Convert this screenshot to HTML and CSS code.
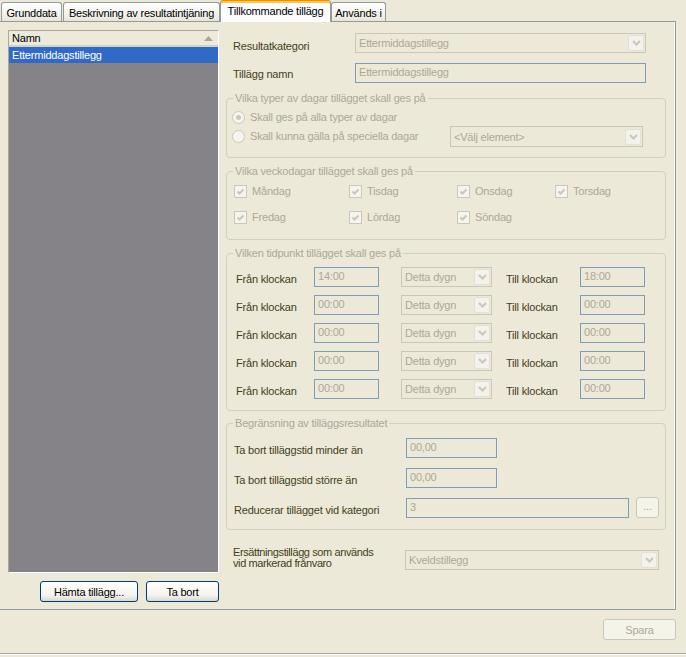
FILE: index.html
```html
<!DOCTYPE html>
<html lang="sv">
<head>
<meta charset="utf-8">
<title>Tillkommande tillägg</title>
<link rel="stylesheet" href="styles.css">
</head>
<body>
<div class="window">
  <div class="tabs">
    <div class="tab tab-grund">Grunddata</div>
    <div class="tab tab-besk">Beskrivning av resultatintjäning</div>
    <div class="tab tab-active">Tillkommande tillägg</div>
    <div class="tab tab-anv">Används i</div>
  </div>

  <div class="panel">
    <div class="left">
      <div class="list">
        <div class="list-head">
          <span>Namn</span>
          <svg class="sort" width="9" height="5" viewBox="0 0 9 5"><path d="M0 5 L4.5 0 L9 5 Z" fill="#ACA899"/></svg>
        </div>
        <div class="list-row selected">Ettermiddagstillegg</div>
        <div class="list-empty"></div>
      </div>
      <div class="left-buttons">
        <button class="btn btn-hamta">Hämta tillägg...</button>
        <button class="btn btn-tabort">Ta bort</button>
      </div>
    </div>

    <div class="form">
      <div class="row row-top">
        <span class="label lbl-top lbl-kat">Resultatkategori</span>
        <div class="combo combo-kat"><span class="val">Ettermiddagstillegg</span><span class="drop"><svg width="9" height="6" viewBox="0 0 9 6"><path d="M1 1 L4.5 4.5 L8 1" fill="none" stroke="#C9C7BA" stroke-width="2"/></svg></span></div>
      </div>
      <div class="row row-top row-namn">
        <span class="label lbl-top lbl-namn">Tillägg namn</span>
        <div class="textbox tb-namn">Ettermiddagstillegg</div>
      </div>

      <fieldset class="group group-typer">
        <legend>Vilka typer av dagar tillägget skall ges på</legend>
        <div class="radio-row radio-row-1">
          <span class="radio"><span class="dot"></span></span>
          <span class="opt-text">Skall ges på alla typer av dagar</span>
        </div>
        <div class="radio-row radio-row-2">
          <span class="radio"></span>
          <span class="opt-text opt-special">Skall kunna gälla på speciella dagar</span>
          <div class="combo combo-element"><span class="val">&lt;Välj element&gt;</span><span class="drop"><svg width="9" height="6" viewBox="0 0 9 6"><path d="M1 1 L4.5 4.5 L8 1" fill="none" stroke="#C9C7BA" stroke-width="2"/></svg></span></div>
        </div>
      </fieldset>

      <fieldset class="group group-vecka">
        <legend>Vilka veckodagar tillägget skall ges på</legend>
        <div class="days">
          <div class="day"><span class="check"><svg width="11" height="11" viewBox="0 0 11 11"><path d="M2.5 5.5 L4.5 7.5 L8.5 3.5" fill="none" stroke="#C9C7BA" stroke-width="2"/></svg></span><span class="opt-text">Måndag</span></div>
          <div class="day"><span class="check"><svg width="11" height="11" viewBox="0 0 11 11"><path d="M2.5 5.5 L4.5 7.5 L8.5 3.5" fill="none" stroke="#C9C7BA" stroke-width="2"/></svg></span><span class="opt-text">Tisdag</span></div>
          <div class="day"><span class="check"><svg width="11" height="11" viewBox="0 0 11 11"><path d="M2.5 5.5 L4.5 7.5 L8.5 3.5" fill="none" stroke="#C9C7BA" stroke-width="2"/></svg></span><span class="opt-text">Onsdag</span></div>
          <div class="day"><span class="check"><svg width="11" height="11" viewBox="0 0 11 11"><path d="M2.5 5.5 L4.5 7.5 L8.5 3.5" fill="none" stroke="#C9C7BA" stroke-width="2"/></svg></span><span class="opt-text">Torsdag</span></div>
          <div class="day"><span class="check"><svg width="11" height="11" viewBox="0 0 11 11"><path d="M2.5 5.5 L4.5 7.5 L8.5 3.5" fill="none" stroke="#C9C7BA" stroke-width="2"/></svg></span><span class="opt-text">Fredag</span></div>
          <div class="day"><span class="check"><svg width="11" height="11" viewBox="0 0 11 11"><path d="M2.5 5.5 L4.5 7.5 L8.5 3.5" fill="none" stroke="#C9C7BA" stroke-width="2"/></svg></span><span class="opt-text">Lördag</span></div>
          <div class="day"><span class="check"><svg width="11" height="11" viewBox="0 0 11 11"><path d="M2.5 5.5 L4.5 7.5 L8.5 3.5" fill="none" stroke="#C9C7BA" stroke-width="2"/></svg></span><span class="opt-text">Söndag</span></div>
        </div>
      </fieldset>

      <fieldset class="group group-tid">
        <legend>Vilken tidpunkt tillägget skall ges på</legend>
        <div class="time-rows">
          <div class="time-row">
            <span class="label lbl-fran">Från klockan</span>
            <div class="textbox tb-time">14:00</div>
            <div class="combo combo-dygn"><span class="val">Detta dygn</span><span class="drop"><svg width="9" height="6" viewBox="0 0 9 6"><path d="M1 1 L4.5 4.5 L8 1" fill="none" stroke="#C9C7BA" stroke-width="2"/></svg></span></div>
            <span class="label lbl-till">Till klockan</span>
            <div class="textbox tb-time">18:00</div>
          </div>
          <div class="time-row">
            <span class="label lbl-fran">Från klockan</span>
            <div class="textbox tb-time">00:00</div>
            <div class="combo combo-dygn"><span class="val">Detta dygn</span><span class="drop"><svg width="9" height="6" viewBox="0 0 9 6"><path d="M1 1 L4.5 4.5 L8 1" fill="none" stroke="#C9C7BA" stroke-width="2"/></svg></span></div>
            <span class="label lbl-till">Till klockan</span>
            <div class="textbox tb-time">00:00</div>
          </div>
          <div class="time-row">
            <span class="label lbl-fran">Från klockan</span>
            <div class="textbox tb-time">00:00</div>
            <div class="combo combo-dygn"><span class="val">Detta dygn</span><span class="drop"><svg width="9" height="6" viewBox="0 0 9 6"><path d="M1 1 L4.5 4.5 L8 1" fill="none" stroke="#C9C7BA" stroke-width="2"/></svg></span></div>
            <span class="label lbl-till">Till klockan</span>
            <div class="textbox tb-time">00:00</div>
          </div>
          <div class="time-row">
            <span class="label lbl-fran">Från klockan</span>
            <div class="textbox tb-time">00:00</div>
            <div class="combo combo-dygn"><span class="val">Detta dygn</span><span class="drop"><svg width="9" height="6" viewBox="0 0 9 6"><path d="M1 1 L4.5 4.5 L8 1" fill="none" stroke="#C9C7BA" stroke-width="2"/></svg></span></div>
            <span class="label lbl-till">Till klockan</span>
            <div class="textbox tb-time">00:00</div>
          </div>
          <div class="time-row">
            <span class="label lbl-fran">Från klockan</span>
            <div class="textbox tb-time">00:00</div>
            <div class="combo combo-dygn"><span class="val">Detta dygn</span><span class="drop"><svg width="9" height="6" viewBox="0 0 9 6"><path d="M1 1 L4.5 4.5 L8 1" fill="none" stroke="#C9C7BA" stroke-width="2"/></svg></span></div>
            <span class="label lbl-till">Till klockan</span>
            <div class="textbox tb-time">00:00</div>
          </div>
        </div>
      </fieldset>

      <fieldset class="group group-begr">
        <legend>Begränsning av tilläggsresultatet</legend>
        <div class="begr-rows">
          <div class="begr-row">
            <span class="label lbl-begr">Ta bort tilläggstid minder än</span>
            <div class="textbox tb-num">00,00</div>
          </div>
          <div class="begr-row">
            <span class="label lbl-begr">Ta bort tilläggstid större än</span>
            <div class="textbox tb-num">00,00</div>
          </div>
          <div class="begr-row">
            <span class="label lbl-begr">Reducerar tillägget vid kategori</span>
            <div class="textbox tb-kat">3</div>
            <button class="btn-dots">...</button>
          </div>
        </div>
      </fieldset>

      <div class="row row-ers">
        <span class="label lbl-ers">Ersättningstillägg som används vid markerad frånvaro</span>
        <div class="combo combo-ers"><span class="val">Kveldstillegg</span><span class="drop"><svg width="9" height="6" viewBox="0 0 9 6"><path d="M1 1 L4.5 4.5 L8 1" fill="none" stroke="#C9C7BA" stroke-width="2"/></svg></span></div>
      </div>
    </div>
  </div>

  <div class="footer">
    <button class="btn-spara">Spara</button>
  </div>
</div>
</body>
</html>
```

FILE: styles.css
```css
* {
  box-sizing: border-box;
}

body {
  margin: 0;
  background: #ECE9D8;
  font-family: "Liberation Sans", Arial, sans-serif;
  font-size: 11px;
  line-height: 13px;
  letter-spacing: -0.2px;
  color: #000;
}

.window {
  width: 686px;
  height: 657px;
  overflow: hidden;
}

/* ---------- tabs ---------- */
.tabs {
  display: flex;
  align-items: flex-end;
  height: 21px;
  padding-left: 1px;
  position: relative;
  z-index: 1;
}

.tab {
  height: 19px;
  border: 1px solid #919B9C;
  border-bottom: none;
  border-radius: 3px 3px 0 0;
  background: linear-gradient(#FFFFFF, #F3F2EC 60%, #E7E5DA);
  display: flex;
  align-items: center;
  justify-content: center;
  padding-top: 2px;
  white-space: nowrap;
}

.tab-grund {
  width: 61px;
}

.tab-besk {
  width: 157px;
  margin-left: 1px;
}

.tab-active {
  align-self: flex-start;
  width: 111px;
  height: 22px;
  background: #FCFCFE;
  border-top: 1px solid #E68B2C;
  box-shadow: inset 0 2px #FFC83C;
  padding-top: 0;
}

.tab-anv {
  width: 55px;
}

/* ---------- panel ---------- */
.panel {
  width: 676px;
  height: 589px;
  border-top: 1px solid #919B9C;
  border-right: 1px solid #919B9C;
  border-bottom: 1px solid #919B9C;
  box-shadow: inset -1px 0 #FFFFFF;
  display: flex;
}

.left {
  padding: 8px 0 0 8px;
  display: flex;
  flex-direction: column;
}

.list {
  width: 211px;
  height: 543px;
  border: 1px solid;
  border-color: #ACA899 #FFFFFF #FFFFFF #ACA899;
  display: flex;
  flex-direction: column;
  background: #858387;
}

.list-head {
  height: 16px;
  background: #EBEADB;
  border-bottom: 2px solid #D6D2C2;
  display: flex;
  align-items: center;
  justify-content: space-between;
  padding: 1px 5px 0 3px;
  flex-shrink: 0;
}

.sort {
  display: block;
}

.list-row {
  height: 16px;
  padding: 1px 0 0 3px;
  display: flex;
  align-items: center;
  flex-shrink: 0;
}

.selected {
  background: #316AC5;
  color: #FFFFFF;
}

.list-empty {
  flex: 1;
  background: #858387;
}

.left-buttons {
  width: 211px;
  margin-top: 8px;
  display: flex;
  justify-content: flex-end;
  gap: 8px;
}

.btn {
  height: 21px;
  border: 1px solid #003C74;
  border-radius: 3px;
  background: linear-gradient(#FFFFFF, #F4F3EE 70%, #DCD8CB);
  font-family: inherit;
  font-size: 11px;
  letter-spacing: -0.2px;
  color: #000;
  padding: 0;
}

.btn-hamta {
  width: 98px;
}

.btn-tabort {
  width: 73px;
}

/* ---------- form ---------- */
.form {
  margin-left: 7px;
  width: 440px;
  padding-top: 11px;
  display: flex;
  flex-direction: column;
}

.label {
  color: #444120;
  white-space: nowrap;
}

.row {
  display: flex;
  align-items: flex-start;
  padding-left: 7px;
}

.row-namn {
  margin-top: 10px;
}

.lbl-top {
  width: 122px;
}

.lbl-kat {
  padding-top: 7px;
}

.lbl-namn {
  padding-top: 5px;
}

.combo {
  height: 20px;
  border: 1px solid #C9C7BA;
  background: #ECE9D8;
  display: flex;
  align-items: center;
  justify-content: space-between;
  padding: 0 1px 0 3px;
  color: #ACA899;
}

.val {
  white-space: nowrap;
  overflow: hidden;
  padding-top: 1px;
}

.drop {
  width: 16px;
  height: 16px;
  border: 1px solid #E3E1D6;
  border-radius: 2px;
  background: #F3F2EC;
  display: flex;
  align-items: center;
  justify-content: center;
  flex-shrink: 0;
}

.drop svg {
  display: block;
}

.combo-kat {
  width: 291px;
}

.textbox {
  height: 20px;
  border: 1px solid #7F9DB9;
  color: #ACA899;
  padding: 2px 0 0 3px;
  white-space: nowrap;
}

.tb-namn {
  width: 291px;
}

/* ---------- group boxes ---------- */
.group {
  margin: 0;
  padding: 0;
  min-width: 0;
  width: 440px;
  border: 1px solid #D0D0BF;
  border-radius: 4px;
}

.group legend {
  margin-left: 6px;
  padding: 0 2px;
  color: #ACA899;
  line-height: 13px;
  white-space: nowrap;
}

.group-typer {
  margin-top: 9px;
  padding-bottom: 10px;
}

.radio-row {
  display: flex;
  align-items: center;
  padding-left: 5px;
}

.radio-row-1 {
  height: 16px;
  margin-top: 4px;
}

.radio-row-2 {
  height: 21px;
  margin-top: 1px;
}

.radio {
  width: 13px;
  height: 13px;
  border: 1px solid #CAC8BB;
  border-radius: 50%;
  background: #F5F4EE;
  display: flex;
  align-items: center;
  justify-content: center;
  flex-shrink: 0;
}

.dot {
  width: 5px;
  height: 5px;
  border-radius: 50%;
  background: #CAC8BB;
}

.opt-text {
  color: #ACA899;
  margin-left: 5px;
  white-space: nowrap;
}

.opt-special {
  width: 200px;
}

.combo-element {
  width: 193px;
  height: 21px;
}

.group-vecka {
  margin-top: 7px;
  padding-bottom: 15px;
}

.days {
  display: grid;
  grid-template-columns: 115px 108px 98px auto;
  grid-template-rows: 14px 14px;
  row-gap: 12px;
  padding-left: 7px;
  margin-top: 6px;
}

.day {
  display: flex;
  align-items: center;
}

.check {
  width: 13px;
  height: 13px;
  border: 1px solid #CAC8BB;
  background: #F5F4EE;
  display: flex;
  align-items: center;
  justify-content: center;
  flex-shrink: 0;
}

.check svg {
  display: block;
}

.group-tid {
  margin-top: 7px;
  padding-bottom: 11px;
}

.time-rows {
  display: flex;
  flex-direction: column;
  gap: 8px;
  margin-top: 7px;
  padding-left: 9px;
}

.time-row {
  display: flex;
  align-items: flex-start;
  height: 20px;
}

.lbl-fran {
  width: 78px;
  padding-top: 6px;
}

.tb-time {
  width: 65px;
}

.combo-dygn {
  width: 91px;
  margin-left: 22px;
}

.lbl-till {
  width: 74px;
  margin-left: 14px;
  padding-top: 6px;
}

.group-begr {
  margin-top: 6px;
  padding-bottom: 11px;
}

.begr-rows {
  display: flex;
  flex-direction: column;
  gap: 10px;
  margin-top: 8px;
  padding-left: 7px;
}

.begr-row {
  display: flex;
  align-items: flex-start;
  height: 20px;
}

.lbl-begr {
  width: 172px;
  padding-top: 6px;
}

.tb-num {
  width: 91px;
}

.tb-kat {
  width: 223px;
}

.btn-dots {
  width: 23px;
  height: 21px;
  margin: -1px 0 0 7px;
  border: 1px solid #C9C7BA;
  border-radius: 3px;
  background: #F5F4EA;
  color: #ACA899;
  font-family: inherit;
  font-size: 11px;
  padding: 0 0 3px;
}

.row-ers {
  margin-top: 20px;
}

.lbl-ers {
  width: 172px;
  white-space: normal;
  line-height: 11px;
  letter-spacing: -0.4px;
  margin-top: -3px;
  padding-right: 20px;
}

.combo-ers {
  width: 254px;
}

/* ---------- footer ---------- */
.footer {
  height: 44px;
  display: flex;
  justify-content: flex-end;
  align-items: flex-start;
  padding: 9px 10px 0 0;
  border-bottom: 1px solid #ACA899;
  box-shadow: 0 1px #FFFFFF;
}

.btn-spara {
  width: 73px;
  height: 21px;
  border: 1px solid #C9C7BA;
  border-radius: 3px;
  background: #F5F4EA;
  color: #ACA899;
  font-family: inherit;
  font-size: 11px;
  letter-spacing: -0.2px;
  padding: 0;
}
```
